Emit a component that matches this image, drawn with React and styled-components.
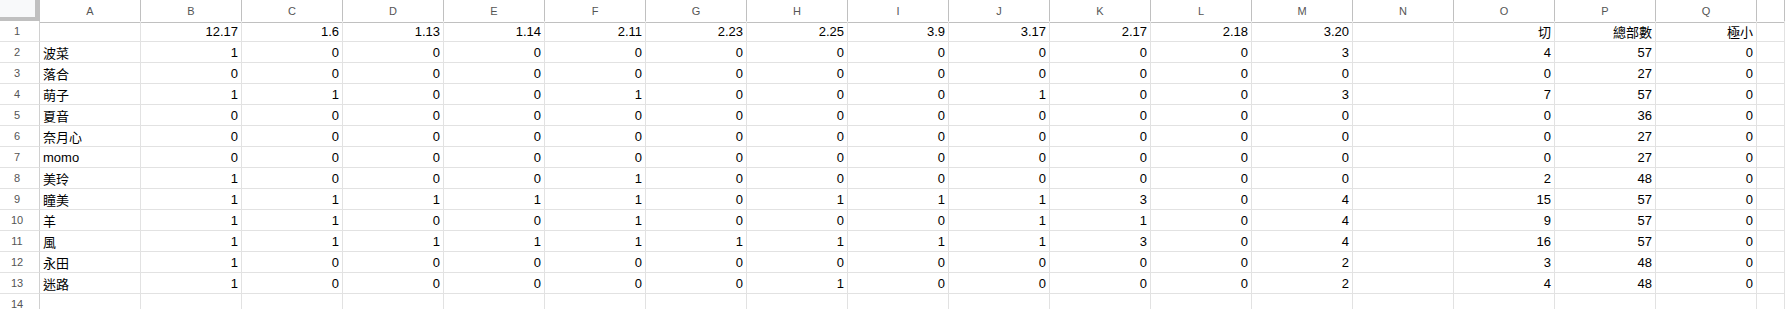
import React from "react";
import styled, { createGlobalStyle } from "styled-components";

const Global = createGlobalStyle`
  html, body { margin: 0; padding: 0; background: #fff; }
  body { overflow: hidden; }
`;

const Sheet = styled.div`
  display: grid;
  grid-template-columns: 40px repeat(17, 101px) 1fr;
  grid-auto-rows: 21px;
  width: 1785px;
  height: 309px;
  overflow: hidden;
  font-family: "Liberation Sans", Arial, "Noto Sans CJK TC", sans-serif;
  font-size: 13px;
  color: #000;
`;

const Corner = styled.div`
  box-sizing: border-box;
  height: 23px;
  background: #c0c0c0;
  display: flex;
  align-items: flex-start;
  justify-content: flex-start;
  border-bottom: 1px solid #c0c0c0;
`;

const CornerInner = styled.div`
  width: 35px;
  height: 17px;
  background: #f8f9fa;
`;

const ColHead = styled.div`
  box-sizing: border-box;
  height: 23px;
  background: #fff;
  border-right: 1px solid #c0c0c0;
  border-bottom: 1px solid #c0c0c0;
  display: flex;
  align-items: center;
  justify-content: center;
  font-size: 11px;
  color: #555;
`;

const RowHead = styled.div`
  box-sizing: border-box;
  background: #fff;
  border-right: 1px solid #d0d0d0;
  border-bottom: 1px solid #e2e2e2;
  display: flex;
  align-items: center;
  justify-content: center;
  padding-right: 5px;
  font-size: 11px;
  color: #555;
`;

const Cell = styled.div`
  box-sizing: border-box;
  border-right: 1px solid #e2e2e2;
  border-bottom: 1px solid #e2e2e2;
  display: flex;
  align-items: center;
  justify-content: ${(p) => (p.$num ? "flex-end" : "flex-start")};
  padding: 0 3px;
  white-space: nowrap;
  overflow: hidden;
  font-family: "Liberation Sans", Arial, "Noto Sans CJK TC", sans-serif;
`;

const letters = "ABCDEFGHIJKLMNOPQ".split("");

const header = ["", "12.17", "1.6", "1.13", "1.14", "2.11", "2.23", "2.25", "3.9", "3.17", "2.17", "2.18", "3.20", "", "切", "總部數", "極小"];

const data = [
  ["波菜", 1, 0, 0, 0, 0, 0, 0, 0, 0, 0, 0, 3, "", 4, 57, 0],
  ["落合", 0, 0, 0, 0, 0, 0, 0, 0, 0, 0, 0, 0, "", 0, 27, 0],
  ["萌子", 1, 1, 0, 0, 1, 0, 0, 0, 1, 0, 0, 3, "", 7, 57, 0],
  ["夏音", 0, 0, 0, 0, 0, 0, 0, 0, 0, 0, 0, 0, "", 0, 36, 0],
  ["奈月心", 0, 0, 0, 0, 0, 0, 0, 0, 0, 0, 0, 0, "", 0, 27, 0],
  ["momo", 0, 0, 0, 0, 0, 0, 0, 0, 0, 0, 0, 0, "", 0, 27, 0],
  ["美玲", 1, 0, 0, 0, 1, 0, 0, 0, 0, 0, 0, 0, "", 2, 48, 0],
  ["瞳美", 1, 1, 1, 1, 1, 0, 1, 1, 1, 3, 0, 4, "", 15, 57, 0],
  ["羊", 1, 1, 0, 0, 1, 0, 0, 0, 1, 1, 0, 4, "", 9, 57, 0],
  ["風", 1, 1, 1, 1, 1, 1, 1, 1, 1, 3, 0, 4, "", 16, 57, 0],
  ["永田", 1, 0, 0, 0, 0, 0, 0, 0, 0, 0, 0, 2, "", 3, 48, 0],
  ["迷路", 1, 0, 0, 0, 0, 0, 1, 0, 0, 0, 0, 2, "", 4, 48, 0],
  ["", "", "", "", "", "", "", "", "", "", "", "", "", "", "", "", ""],
];

export default function App() {
  const rows = [header, ...data];
  return (
    <>
      <Global />
      <Sheet>
        <Corner>
          <CornerInner />
        </Corner>
        {letters.map((l) => (
          <ColHead key={l}>{l}</ColHead>
        ))}
        <ColHead />
        {rows.map((r, i) => (
          <React.Fragment key={i}>
            <RowHead>{i + 1}</RowHead>
            {r.map((v, j) => (
              <Cell key={j} $num={j > 0}>
                {v}
              </Cell>
            ))}
            <Cell />
          </React.Fragment>
        ))}
      </Sheet>
    </>
  );
}
